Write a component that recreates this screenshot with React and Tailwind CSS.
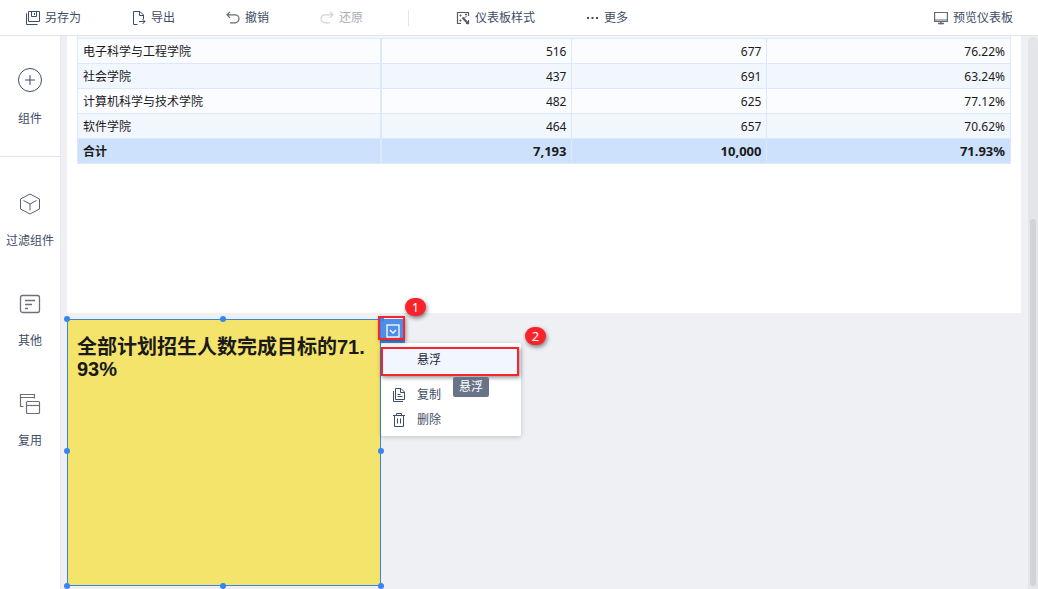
import React from 'react'

const rows = [
    { name: '电子科学与工程学院', actual: '516', plan: '677', rate: '76.22%' },
    { name: '社会学院', actual: '437', plan: '691', rate: '63.24%' },
    { name: '计算机科学与技术学院', actual: '482', plan: '625', rate: '77.12%' },
    { name: '软件学院', actual: '464', plan: '657', rate: '70.62%' }
]

const Icon = ({ size = 14, className = '', children }) => (
    <svg
        width={size}
        height={size}
        viewBox={`0 0 ${size} ${size}`}
        fill="none"
        stroke="currentColor"
        className={`shrink-0 ${className}`}
        aria-hidden="true"
    >
        {children}
    </svg>
)

const SaveIcon = () => (
    <Icon>
        <path d="M2.5 .5h11v10h-11zM.5 2.5v11h11M5.5 .5v5h5v-5M8.5 2v2" />
    </Icon>
)

const ExportIcon = () => (
    <Icon>
        <path d="M5.5 13.5h-4V.5h6.5l3.5 3.5v4M7.5 .5v4h4M7 10.5h6M10.5 8l2.5 2.5-2.5 2.5" />
    </Icon>
)

const UndoIcon = () => (
    <Icon className="text-[#666b75]">
        <path d="M4 .8L1 3.8l3 3M1 3.8h8a4 4 0 0 1 0 8H4" strokeWidth="1.2" />
    </Icon>
)

const RedoIcon = () => (
    <Icon className="text-[#d0d3d8]">
        <path d="M10 .8l3 3-3 3M13 3.8H5a4 4 0 0 0 0 8h5" strokeWidth="1.2" />
    </Icon>
)

const StyleIcon = () => (
    <Icon className="text-[#555a65]">
        <path d="M5 12.5H1.500V1.500h11V5M12.500 9v3.500H10" strokeWidth="1.2" />
        <path d="M6.500 6.500l6 6.500" strokeWidth="2" />
        <path d="M3.500 4.500h2M4.500 3.500v2M9 3.500h2M10 2.500v2M3.500 9.500h2M4.500 8.500v2M8 7.500L10.500 5" />
    </Icon>
)

const MoreIcon = () => (
    <Icon size={13}>
        <path d="M1 7h2M5.500 7h2M10 7h2" strokeWidth="2" />
    </Icon>
)

const PreviewIcon = () => (
    <Icon className="text-[#666b75]">
        <path d="M.6 1.500h12.800v9H.6zM.6 9h12.800" strokeWidth="1.200" />
        <path d="M4 12.500h6M7 10.500v3" strokeWidth="1.500" />
    </Icon>
)

const AddIcon = () => (
    <Icon size={28}>
        <circle cx="14" cy="14" r="11.500" />
        <path d="M14 9v10M9 14h10" />
    </Icon>
)

const CubeIcon = () => (
    <Icon size={24} className="text-[#5a6475]">
        <path d="M12 2l9.500 5v10L12 22l-9.500-5V7zM5.500 8.500L12 12l6.500-3.500M12 12v6.500" />
    </Icon>
)

const OtherIcon = () => (
    <Icon size={24} className="text-[#6b7079]">
        <rect x="2.500" y="3.500" width="19" height="17" rx="2" strokeWidth="1.300" />
        <path d="M7 8.500h10M7 12.500h7M7 16.500h3" strokeWidth="1.300" />
    </Icon>
)

const ReuseIcon = () => (
    <Icon size={24} className="text-[#6b7079]">
        <path d="M5.500 14.500h-3v-12h14v4M2.500 5.500h14" strokeWidth="1.200" />
        <rect x="8.500" y="9.500" width="13" height="12" rx="1" strokeWidth="1.200" />
        <path d="M8.500 13.500h13" strokeWidth="1.200" />
    </Icon>
)

const CopyIcon = () => (
    <Icon>
        <path d="M3.500 .5h5.500l3.500 3.500v7.500h-9zM8.500 .5v4h4M1.500 3v10.500h9.500M5.500 6.500h3M5.500 8.500h5" />
    </Icon>
)

const TrashIcon = () => (
    <Icon>
        <path d="M1 2.500h12M4.500 2.500v-2h5v2M2.500 2.500v11h9v-11M5.500 5.500v5M8.500 5.500v5" />
    </Icon>
)

const ToolButton = ({ icon, label, disabled }) => (
    <button
        type="button"
        disabled={disabled}
        className="flex items-center gap-[5px] leading-4 whitespace-nowrap disabled:text-[#a9aeb8]"
    >
        {icon}
        <span>{label}</span>
    </button>
)

const SideButton = ({ icon, label }) => (
    <button type="button" className="flex flex-col items-center gap-4 leading-[18px] whitespace-nowrap">
        {icon}
        <span>{label}</span>
    </button>
)

const Marker = ({ className, children }) => (
    <span
        className={`absolute flex h-[18px] w-[21px] items-center justify-center rounded-full bg-[#fa232b] text-[13px] leading-4 text-white shadow-[1px_2px_4px_rgba(0,0,0,0.5)] ${className}`}
    >
        {children}
    </span>
)

// Resize dots on the edges of the selected widget
const handles = [
    '-top-1 -left-1',
    '-top-1 left-[152px]',
    '-top-1 -right-1',
    'top-[128px] -left-1',
    'top-[128px] -right-1',
    '-bottom-1 -left-1',
    '-bottom-1 left-[152px]',
    '-bottom-1 -right-1'
]

const Toolbar = () => (
    <header className="flex h-9 shrink-0 items-center border-b border-[#e3e5e9] bg-white pr-[25px] pl-[26px]">
        <div className="flex items-center gap-[51px]">
            <ToolButton icon={<SaveIcon />} label="另存为" />
            <ToolButton icon={<ExportIcon />} label="导出" />
            <ToolButton icon={<UndoIcon />} label="撤销" />
            <ToolButton icon={<RedoIcon />} label="还原" disabled />
        </div>
        <div className="mr-[47px] ml-[45px] h-4 w-px bg-[#e3e5e9]"></div>
        <div className="flex items-center gap-[51px]">
            <ToolButton icon={<StyleIcon />} label="仪表板样式" />
            <ToolButton icon={<MoreIcon />} label="更多" />
        </div>
        <div className="ml-auto">
            <ToolButton icon={<PreviewIcon />} label="预览仪表板" />
        </div>
    </header>
)

const Sidebar = () => (
    <nav className="flex w-[61px] shrink-0 flex-col border-r border-[#e6e7eb] bg-white">
        <div className="flex justify-center border-b border-[#e3e5e9] pt-[30px] pb-7">
            <SideButton icon={<AddIcon />} label="组件" />
        </div>
        <div className="flex flex-col items-center gap-[42px] pt-[35px]">
            <SideButton icon={<CubeIcon />} label="过滤组件" />
            <SideButton icon={<OtherIcon />} label="其他" />
            <SideButton icon={<ReuseIcon />} label="复用" />
        </div>
    </nav>
)

const DataTable = () => (
    <table className="w-full table-fixed border-collapse border border-[#dae9fc] text-[#1a1a1a]">
        <colgroup>
            <col className="w-[32.5%]" />
            <col className="w-[20.5%]" />
            <col className="w-[20.9%]" />
            <col />
        </colgroup>
        <tbody>
            {rows.map((row) => (
                <tr key={row.name} className="h-[25px] border-b border-[#dae9fc] odd:bg-[#fbfcff] even:bg-[#f2f7fe]">
                    <td className="border-r-2 border-[#dae9fc] px-[5px] pt-[2px] leading-4">{row.name}</td>
                    <td className="border-r border-[#dae9fc] px-[5px] pt-[2px] text-right leading-4">{row.actual}</td>
                    <td className="border-r border-[#dae9fc] px-[5px] pt-[2px] text-right leading-4">{row.plan}</td>
                    <td className="px-[5px] pt-[2px] text-right leading-4">{row.rate}</td>
                </tr>
            ))}
        </tbody>
        <tfoot>
            <tr className="h-[25px] bg-[#cde0fc] font-bold">
                <th className="border-r-2 border-[#dae9fc] px-[5px] pt-[2px] text-left leading-4">合计</th>
                <td className="border-r border-[#dae9fc] px-[5px] text-right text-[13px] leading-4">7,193</td>
                <td className="border-r border-[#dae9fc] px-[5px] text-right text-[13px] leading-4">10,000</td>
                <td className="px-[5px] text-right text-[13px] leading-4">71.93%</td>
            </tr>
        </tfoot>
    </table>
)

const WidgetMenu = () => (
    <div className="absolute top-[23px] left-[313px] w-[140px] rounded-xs bg-white pt-1 pb-1 shadow-[0_1px_5px_rgba(0,0,0,0.2)]">
        <button type="button" className="flex h-[26px] w-full items-center bg-[#f2f6fe] pl-9 text-[#1f2a3d]">
            悬浮
        </button>
        <div className="mt-[9px] flex flex-col">
            <button type="button" className="flex h-[25px] items-center gap-[11px] pl-[11px]">
                <CopyIcon />
                复制
            </button>
            <button type="button" className="flex h-[25px] items-center gap-[11px] pl-[11px]">
                <TrashIcon />
                删除
            </button>
        </div>
    </div>
)

const TextWidget = () => (
    <section className="relative h-[267px] w-[314px] border border-[#3b84e6] bg-[#f5e46b]">
        <h2 className="px-[9px] pt-4 font-['Liberation_Sans','Noto_Sans_CJK_SC',sans-serif] text-xl leading-[22px] font-bold break-all text-[#1a1a1a]">
            全部计划招生人数完成目标的71.93%
        </h2>
        <WidgetMenu />
        <button
            type="button"
            aria-label="展开菜单"
            className="absolute -top-px left-[313px] flex size-6 items-center justify-center bg-[#4d8fe8] text-white"
        >
            <Icon>
                <rect x="1" y="1" width="12" height="12" strokeWidth="1.300" />
                <path d="M4 6l3 3 3-3" strokeWidth="1.300" />
            </Icon>
        </button>
        {handles.map((pos) => (
            <span key={pos} className={`absolute size-[6px] rounded-full bg-[#3685f2] ${pos}`}></span>
        ))}
        <div className="pointer-events-none absolute -top-1 left-[310px] h-6 w-[27px] border-2 border-[#fa232b] shadow-[1px_2px_4px_rgba(0,0,0,0.4)]"></div>
        <div className="pointer-events-none absolute top-[27px] left-[313px] h-[29px] w-[138px] border-2 border-[#fa232b] shadow-[1px_2px_4px_rgba(0,0,0,0.4)]"></div>
        <Marker className="-top-[22px] left-[337px]">1</Marker>
        <Marker className="top-[7px] left-[457px]">2</Marker>
        <div
            role="tooltip"
            className="absolute top-[57px] left-[385px] rounded-xs bg-[#687387] px-[6px] leading-5 whitespace-nowrap text-white"
        >
            悬浮
        </div>
    </section>
)

const App = () => {
    return (
        <div className="flex min-h-screen flex-col bg-[#eff0f4] font-['Noto_Sans','Noto_Sans_CJK_SC',sans-serif] text-xs text-[#3d4d66]">
            <Toolbar />
            <div className="flex flex-1">
                <Sidebar />
                <main className="min-w-0 flex-1 pr-[7px] pl-[6px]">
                    <section className="mb-[6px] bg-white px-[10px] pb-[149px]">
                        <div className="h-[2px] border-x border-[#dae9fc] bg-[#f2f7fe]"></div>
                        <DataTable />
                    </section>
                    <TextWidget />
                </main>
                <div className="mt-px w-[10px] shrink-0 rounded-t-full bg-[#e4e5e9] px-[2px] pt-[182px]">
                    <div className="h-[367px] rounded-full bg-[#d2d3d7]"></div>
                </div>
            </div>
        </div>
    )
}

export default App
